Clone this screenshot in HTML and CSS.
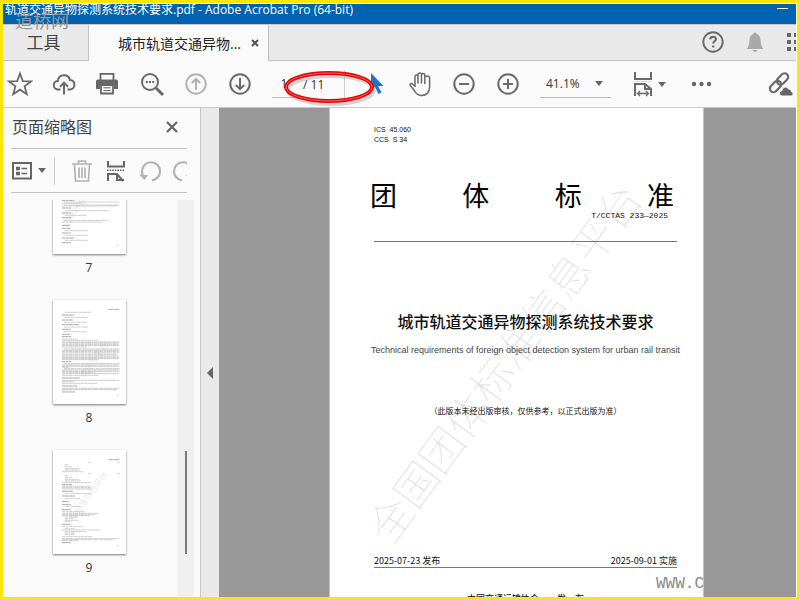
FILE: index.html
```html
<!DOCTYPE html>
<html lang="zh-CN">
<head>
<meta charset="utf-8">
<meta name="viewport" content="width=device-width, initial-scale=1">
<title>轨道交通异物探测系统技术要求.pdf - Adobe Acrobat Pro (64-bit)</title>
<link rel="stylesheet" href="styles.css">
</head>
<body>
<div class="window">
  <header class="titlebar">
    <span class="titlebar-text">轨道交通异物探测系统技术要求.pdf - Adobe Acrobat Pro (64-bit)</span>
    <button class="minimize" aria-label="最小化"></button>
  </header>
  <span class="stamp">道桥网</span>

  <nav class="tabs">
    <button class="tab tab-tools">工具</button>
    <div class="tab tab-doc">
      <span>城市轨道交通异物...</span>
      <button class="tab-close" aria-label="关闭标签"><svg width="8" height="8" viewBox="0 0 8 8"><path d="M1 1l6 6M7 1L1 7" stroke="#555" stroke-width="2"/></svg></button>
    </div>
    <div class="tabs-rest">
      <button class="icon" aria-label="帮助"><svg width="24" height="24" viewBox="0 0 24 24" fill="none" stroke="#6a6a6a"><circle cx="12" cy="12" r="9.7" stroke-width="1.9"/><path d="M9.2 9.4c.1-3.5 5.8-3.4 5.7-.1 0 2-2.7 2-2.7 4.2" stroke-width="2.1"/><path d="M11.1 15.5h2.2v2h-2.2z" fill="#6a6a6a" stroke="none"/></svg></button>
      <button class="icon" aria-label="通知"><svg width="24" height="24" viewBox="0 0 24 24" fill="#a9a9a9"><path d="M12 2.5c1 0 1.6.7 1.6 1.6 2.5.8 3.7 2.8 3.9 5.6.3 4.3.7 6.5 2.9 9.3H3.600c2.200-2.800 2.600-5 2.900-9.300.2-2.800 1.400-4.800 3.900-5.600 0-.9.6-1.600 1.600-1.600zM9.500 20h5c-.5 1.300-1.400 2-2.500 2s-2-.7-2.500-2z"/></svg></button>
      <button class="icon icon-grid" aria-label="应用"><svg width="18" height="18" viewBox="0 0 18 18" fill="#666"><path d="M0 0h4v4H0zM7 0h4v4H7zM14 0h4v4h-4zM0 7h4v4H0zM7 7h4v4H7zM14 7h4v4h-4zM0 14h4v4H0zM7 14h4v4H7zM14 14h4v4h-4z"/></svg></button>
    </div>
  </nav>

  <div class="toolbar">
    <button class="icon" aria-label="收藏"><svg width="26" height="26" viewBox="0 0 26 26"><path d="M13 2.500l2.800 7.600 8.100.3-6.300 5 2.200 7.800-6.800-4.500-6.800 4.500 2.200-7.800-6.300-5 8.100-.3z" fill="none" stroke="#6a6a6a" stroke-width="1.8"/></svg></button>
    <button class="icon" aria-label="上传"><svg width="26" height="26" viewBox="0 0 26 26" fill="none" stroke="#6a6a6a" stroke-width="2"><path d="M9.500 18.500H7.300c-2.700 0-4.500-1.900-4.500-4.200 0-2.500 1.800-4.100 4-4.200C7.200 6.500 9.800 4.300 13 4.300c2.900 0 5.300 1.900 6 4.700 2.600.2 4.400 2.200 4.400 4.700 0 2.700-2 4.800-4.500 4.800h-2.400"/><path d="M13 23.500V12.500M9 15.800l4-4.200 4 4.200"/></svg></button>
    <button class="icon" aria-label="打印"><svg width="26" height="26" viewBox="0 0 26 26"><path d="M5.500 9V2.900h13V9" fill="none" stroke="#666" stroke-width="1.800"/><path d="M3 8.500h18c1.200 0 2 .8 2 2V18h-4v-4H5v4H1v-7.500c0-1.200.8-2 2-2z" fill="#666"/><path d="M6 14h12v8.500H6z" fill="#fafafa" stroke="#666" stroke-width="1.800"/><path d="M8.500 16.800h7M8.500 19.500h7" stroke="#666"/></svg></button>
    <button class="icon" aria-label="查找"><svg width="26" height="26" viewBox="0 0 26 26" fill="none" stroke="#6a6a6a"><circle cx="11" cy="11" r="8" stroke-width="2"/><path d="M17 17l7 7" stroke-width="3"/><path d="M6.800 11h2M10 11h2M13.200 11h2" stroke-width="2"/></svg></button>
    <button class="icon" aria-label="上一页"><svg width="26" height="26" viewBox="0 0 26 26" fill="none" stroke="#b3b3b3" stroke-width="2"><circle cx="13" cy="13" r="9.700"/><path d="M13 19V8.500M8.800 12L13 7.800l4.200 4.200"/></svg></button>
    <button class="icon" aria-label="下一页"><svg width="26" height="26" viewBox="0 0 26 26" fill="none" stroke="#6a6a6a" stroke-width="2"><circle cx="13" cy="13" r="9.700"/><path d="M13 7v10.500M8.800 14l4.200 4.200 4.200-4.200"/></svg></button>
    <div class="pager">
      <input class="pager-input" type="text" value="1" aria-label="页码">
      <span>/ 11</span>
      <svg class="ring" width="104" height="44" viewBox="0 0 104 44" fill="none"><ellipse cx="51" cy="24" rx="43" ry="14" stroke="#999" stroke-opacity=".4" stroke-width="4"/><ellipse cx="49" cy="21" rx="43" ry="14" stroke="#e00c0c" stroke-width="4"/><ellipse cx="49" cy="21" rx="43" ry="14" stroke="#ff5555" stroke-width="1"/></svg>
    </div>
    <button class="icon" aria-label="选择"><svg width="26" height="26" viewBox="0 0 26 26"><path d="M8 2v18l4-4 3.500 7 3-1.500-3.500-6.500h5.500z" fill="#1f73c9"/></svg></button>
    <button class="icon" aria-label="手形工具"><svg width="26" height="26" viewBox="0 0 26 26" fill="none" stroke="#6a6a6a" stroke-width="1.500" stroke-linejoin="round" stroke-linecap="round"><path d="M8 15.500V5.700c0-2.200 3-2.200 3 0V12 3.600c0-2.200 3.500-2.200 3.500 0V12 4.200c0-2.200 3.300-2.200 3.300 0V12.500 6.500c0-2 4.800-2.200 4.800.5V16c0 5-3.200 8.500-7.600 8.500-4 0-6-1.800-7.500-4.700L3.200 14.500c-.9-1.700 1.300-2.600 2.500-1.300L8 15.500"/></svg></button>
    <button class="icon" aria-label="缩小"><svg width="26" height="26" viewBox="0 0 26 26" fill="none" stroke="#6a6a6a" stroke-width="2"><circle cx="13" cy="13" r="9.700"/><path d="M8 13h10"/></svg></button>
    <button class="icon" aria-label="放大"><svg width="26" height="26" viewBox="0 0 26 26" fill="none" stroke="#6a6a6a" stroke-width="2"><circle cx="13" cy="13" r="9.700"/><path d="M8 13h10M13 8v10"/></svg></button>
    <div class="zoom">
      <select class="zoom-select" aria-label="缩放"><option>41.1%</option></select>
      <i class="caret"></i>
    </div>
    <button class="fit" aria-label="适合宽度"><svg width="26" height="26" viewBox="0 0 26 26" fill="none" stroke="#6a6a6a" stroke-width="2"><path d="M5 1v7h16V1M5 25V13h10l6 5v7M15 13v5h6"/><path d="M7.500 22.500h11M10 20l-2.500 2.500L10 25M16 20l2.500 2.500L16 25" stroke-width="1.300"/><path d="M4 10.500h18" stroke="#ddd" stroke-width="1"/></svg><i class="caret"></i></button>
    <button class="icon" aria-label="更多"><svg width="26" height="26" viewBox="0 0 26 26" fill="#666"><circle cx="6" cy="13" r="2.200"/><circle cx="13.500" cy="13" r="2.200"/><circle cx="21" cy="13" r="2.200"/></svg></button>
    <button class="icon icon-link" aria-label="共享链接"><svg width="26" height="26" viewBox="0 0 26 26"><g fill="none" stroke="#6a6a6a" stroke-width="2.200"><rect x="-6.500" y="-3.700" width="13" height="7.400" rx="3.700" transform="translate(15.500 8) rotate(-46)"/><rect x="-6.500" y="-3.700" width="13" height="7.400" rx="3.700" transform="translate(8.500 15.500) rotate(-46)"/></g><path d="M15.500 25c-4 0-4-5-.5-5.300.5-4.500 5.500-4.500 6.500-1.700 2.500 0 3 1.800 2.800 2.700 2.500.5 2.300 4.300-.5 4.300z" fill="#666" stroke="#fafafa" stroke-width="1"/></svg></button>
  </div>

  <main class="work">
    <aside class="panel">
      <div class="panel-head">
        <h2>页面缩略图</h2>
        <button class="panel-close" aria-label="关闭面板"><svg width="12" height="12" viewBox="0 0 12 12"><path d="M1 1l10 10M11 1L1 11" stroke="#666" stroke-width="2.200"/></svg></button>
      </div>
      <div class="panel-tools">
        <button class="options" aria-label="选项"><svg width="20" height="18" viewBox="0 0 20 18" fill="none" stroke="#666"><rect x="1" y="1" width="18" height="15.500" stroke-width="2"/><path d="M4 6.500h4M4 11.500h4" stroke-width="3.500"/><path d="M9.500 6.500H15M9.500 11.500H15" stroke-width="1.500"/></svg><i class="caret"></i></button>
        <button class="ptool" aria-label="删除"><svg width="22" height="24" viewBox="0 0 22 24" fill="none" stroke="#b3b3b3" stroke-width="1.700"><path d="M1 5h20M7.500 4.500V2h7v2.500M3.500 5l1 17h13l1-17M8 8.500v10.500M11 8.500v10.500M14 8.500v10.500"/></svg></button>
        <button class="ptool" aria-label="拆分"><svg width="20" height="24" viewBox="0 0 20 24" fill="none" stroke="#666" stroke-width="2"><path d="M2 2v5.500h16V2M2 22v-7h9l6 7M11 15v6h7"/><path d="M1 11.200h18" stroke-width="1.600" stroke-dasharray="1.600 1"/></svg></button>
        <button class="ptool" aria-label="逆时针旋转"><svg width="24" height="24" viewBox="0 0 24 24"><path d="M14 21.500c5.500-1.500 8-5 8-9a9 9 0 0 0-18-.5c0 2 .3 4 1.500 6" fill="none" stroke="#b3b3b3" stroke-width="2.200"/><path d="M1 15.500l9 .5-3.500 5z" fill="#b3b3b3"/></svg></button>
        <button class="ptool" aria-label="顺时针旋转"><svg width="24" height="24" viewBox="0 0 24 24"><path d="M10 21.500c-5.500-1.500-8-5-8-9a9 9 0 0 1 18-.5c0 2-.3 4-1.500 6" fill="none" stroke="#b3b3b3" stroke-width="2.200"/><path d="M23 15.500l-9 .5 3.500 5z" fill="#b3b3b3"/></svg></button>
      </div>
      <div class="thumbs">
        <div class="thumb-list">
          <figure>
            <svg class="thumb" viewBox="0 0 219 312" aria-hidden="true">
              <text class="mark" transform="translate(42 232) rotate(-54)">团体标准信息平台</text>
              <path class="ln" d="M33 156h167M27 160h60M33 165h167M27 168h165M35 182h132M35 196h66M35 242h70M35 256h70M35 271h70"/>
              <path class="ln" d="M33 211h132M27 216h120"/>
              <path class="ln hd" d="M27 151h37M27 174h28M27 189h26M27 203h28M27 226h24M27 235h26M27 249h26M27 264h36M27 278h26M193 286h2"/>
            </svg>
            <figcaption>7</figcaption>
          </figure>
          <figure>
            <svg class="thumb" viewBox="0 0 219 312" aria-hidden="true">
              <text class="mark" transform="translate(92 236) rotate(-54)">准信息平台</text>
              <path class="ln" d="M35 37h79M33 52h72M33 67h66M33 81h72M33 95h68M27 117h44M27 121h110M27 141h75M27 164h165M27 179h110M27 202h22M27 217h100M27 226h110M27 245h40M27 250h105M27 274h40M27 277h40"/>
              <path class="ln tx" d="M27 126h172M27 129h170M27 133h172M27 137h172M33 147h167M27 151h172M27 155h172M27 159h172M27 168h172M27 172h172M27 176h172M33 191h167M27 195h172M27 199h172M33 206h167M27 210h172M27 214h172M27 221h172M27 241h172M27 265h172M27 269h165"/>
              <path class="ln hd" d="M167 28h32M27 45h38M27 60h34M27 74h52M27 88h26M27 103h24M27 110h28M27 185h28M27 234h54M27 258h46M193 287h3"/>
            </svg>
            <figcaption>8</figcaption>
          </figure>
          <figure>
            <svg class="thumb" viewBox="0 0 219 312" aria-hidden="true">
              <text class="mark" transform="translate(62 214) rotate(-54)">体标准信息平台</text>
              <path class="ln" d="M106 38h8M192 38h8M35 44h10M35 50h22M35 56h46M35 60h44M27 65h64M106 71h8M192 71h8M35 77h10M35 83h22M35 89h44M35 93h48M27 98h86M27 109h84M27 113h86M27 117h90M35 131h80M35 146h46M35 169h50M27 185h68M27 190h110M27 194h100M27 197h84M35 201h40M35 206h24M35 211h42M35 215h20M27 230h62M35 236h30M27 240h116M35 245h64M35 249h32M35 254h30M27 260h92M27 266h172M27 269h155M27 272h48"/>
              <path class="ln hd" d="M167 29h32M27 104h30M27 124h34M27 138h40M27 155h22M27 164h26M27 179h26M27 223h26M27 278h26M193 287h3"/>
            </svg>
            <figcaption>9</figcaption>
          </figure>
        </div>
        <div class="scrollbar"><div class="scroll-handle"></div></div>
      </div>
    </aside>
    <button class="splitter" aria-label="折叠面板"></button>
    <section class="viewer">
      <article class="page">
        <p class="codes">ICS  45.060<br>CCS  S 34</p>
        <h1 class="kind"><span>团</span><span>体</span><span>标</span><span>准</span></h1>
        <p class="number">T/CCTAS 233—2025</p>
        <p class="title">城市轨道交通异物探测系统技术要求</p>
        <p class="subtitle">Technical requirements of foreign object detection system for urban rail transit</p>
        <p class="notice">（此版本未经出版审核，仅供参考，以正式出版为准）</p>
        <div class="dates"><span>2025-07-23 发布</span><span>2025-09-01 实施</span></div>
        <p class="publisher"><span>中国交通运输协会</span><span>发</span><span>布</span></p>
        <span class="watermark">全国团体标准信息平台</span>
        <span class="site">WWW.C</span>
      </article>
    </section>
  </main>
</div>
</body>
</html>
```

FILE: styles.css
```css
* { box-sizing: border-box; }

body {
  margin: 0;
  font-family: "Open Sans", "Noto Sans CJK SC", sans-serif;
  color: #333;
}

button, input, select {
  margin: 0;
  padding: 0;
  border: 0;
  background: none;
  font: inherit;
  color: inherit;
}

svg { display: block; flex: none; }
h1, h2, p, figure { margin: 0; font-weight: 400; }

.window {
  position: relative;
  display: flex;
  flex-direction: column;
  height: 100vh;
  border: 3px solid #fbe60a;
  padding: 1px 1px 0 0;
  background: #fff;
  overflow: hidden;
}

.titlebar {
  display: flex;
  justify-content: space-between;
  flex: none;
  height: 20px;
  padding: 0 8px 0 2px;
  background: #0063b1;
  color: #fff;
  font-size: 12px;
  line-height: 11px;
  white-space: nowrap;
}
.minimize { width: 11px; height: 5px; border-bottom: 1px solid #fff; }

.stamp {
  position: absolute;
  left: 12px;
  top: 8px;
  font-size: 18px;
  line-height: 20px;
  color: #8c98a3;
}

.tabs {
  display: flex;
  flex: none;
  height: 37px;
  border-top: 1px solid #c8c8c8;
  background: #e9e9e9;
}
.tab { display: flex; align-items: center; padding-bottom: 2px; border-right: 1px solid #c4c4c4; }
.tab-tools {
  justify-content: center;
  width: 86px;
  padding-right: 4px;
  border-bottom: 1px solid #c4c4c4;
  font-size: 17px;
  color: #444;
}
.tab-doc {
  justify-content: space-between;
  width: 180px;
  padding: 0 9px 0 29px;
  background: #fafafa;
  font-size: 14px;
  color: #222;
}
.tabs-rest {
  display: flex;
  flex: 1;
  align-items: center;
  justify-content: flex-end;
  gap: 10px;
  padding-bottom: 2px;
  border-bottom: 1px solid #c4c4c4;
  overflow: hidden;
}
.icon { display: flex; align-items: center; justify-content: center; flex: none; width: 32px; height: 32px; }
.icon-grid { justify-content: flex-start; width: 25px; padding-left: 6px; margin-right: -10px; }

.toolbar {
  display: flex;
  align-items: center;
  gap: 12px;
  flex: none;
  height: 47px;
  padding-left: 1px;
  background: #fafafa;
  border-bottom: 1px solid #c8c8c8;
  font-size: 12px;
}
.pager {
  position: relative;
  display: flex;
  align-items: center;
  gap: 7px;
  flex: none;
  width: 76px;
  height: 28px;
  margin: 0 0 0 4px;
}
.pager::after { content: ""; width: 1px; height: 28px; margin-left: 13px; background: #ccc; }
.pager-input { width: 24px; height: 27px; border-bottom: 1px solid #bbb; text-align: center; }
.ring { position: absolute; left: 8px; top: -4px; z-index: 1; pointer-events: none; }

.caret {
  flex: none;
  border: 4px solid transparent;
  border-top: 5px solid #666;
  border-bottom: 0;
}
.zoom { display: flex; align-items: center; flex: none; width: 71px; margin-left: 4px; border-bottom: 1px solid #bbb; }
.zoom-select { flex: 1; min-width: 0; height: 26px; padding-left: 6px; appearance: none; }
.zoom .caret { margin-right: 8px; }
.fit { display: flex; align-items: center; justify-content: center; gap: 2px; width: 50px; height: 32px; }
.icon-link { margin-left: auto; }

.work { display: flex; flex: 1; min-height: 0; }

.panel {
  display: flex;
  flex-direction: column;
  flex: none;
  width: 198px;
  border-right: 1px solid #c4c4c4;
  background: #fafafa;
}
.panel-head, .panel-tools { display: flex; align-items: center; margin: 0 13px 0 8px; border-bottom: 1px solid #c4c4c4; }
.panel-head { justify-content: space-between; height: 41px; padding: 0 9px 2px 1px; }
.panel-head h2 { font-size: 16px; line-height: 24px; color: #444; }
.panel-tools { height: 44px; overflow: hidden; }
.options { display: flex; align-items: center; gap: 6px; flex: none; height: 28px; padding: 0 8px 0 1px; border-right: 1px solid #ccc; }
.ptool { display: flex; justify-content: center; flex: none; width: 34px; }
.options + .ptool { margin-left: 10px; }

.thumbs { display: flex; flex: 1; min-height: 0; margin: 7px 6px 0 0; overflow: hidden; }
.thumb-list { flex: 1; margin-top: -50px; padding-right: 3px; }
.thumb-list figure { display: flex; flex-direction: column; align-items: center; height: 150px; }
.thumb { width: 73px; height: 104px; background: #fff; box-shadow: 0 1px 2px #777; }
.thumb-list figcaption { margin-top: 5px; font-size: 12px; line-height: 18px; }
.ln { fill: none; stroke: #b4b4b4; stroke-width: 2; stroke-dasharray: 11 1 6 1; }
.hd { stroke: #777; }
.tx { stroke: #aaa; }
.mark { font-size: 25px; font-weight: 300; fill: #e4e4e4; }
.scrollbar { display: flex; justify-content: center; align-items: flex-end; width: 16px; padding-bottom: 43px; background: #efefef; }
.scroll-handle { width: 2px; height: 103px; background: #7d7d7d; }

.splitter {
  display: flex;
  align-items: center;
  justify-content: center;
  flex: none;
  width: 18px;
  padding-top: 40px;
  background: #e9e9e9;
}
.splitter::before { content: ""; border: 6px solid transparent; border-right-color: #666; border-left: 0; }

.viewer { display: flex; justify-content: center; flex: 1; min-width: 0; padding-left: 18px; background: #989898; overflow: hidden; }
.page {
  position: relative;
  flex: none;
  width: 375px;
  height: 530px;
  padding: 17px 26px 0 44px;
  border: 1px solid #c4c4c4;
  border-top: 0;
  background: #fff;
  color: #111;
  overflow: hidden;
}
.codes { font: 7px/10px "Liberation Sans", sans-serif; white-space: pre; }
.kind { display: flex; justify-content: space-between; margin: 36px 3px 0 -4px; font-size: 27px; line-height: 30px; color: #000; }
.number { margin-right: 9px; font: 8px/10px "Liberation Mono", monospace; text-align: right; }
.title { margin-top: 20px; border-top: 1px solid #777; padding-top: 67px; font-size: 16px; line-height: 26px; font-weight: 500; text-align: center; white-space: nowrap; }
.subtitle { margin: 9px -4px 0; font: 9px/12px "Liberation Sans", sans-serif; color: #444; text-align: center; white-space: nowrap; }
.notice { margin-top: 49px; font-size: 8px; line-height: 12px; text-align: center; white-space: nowrap; }
.dates { display: flex; justify-content: space-between; margin-top: 138px; border-bottom: 1px solid #777; font-size: 9px; line-height: 12px; font-family: "Noto Sans CJK SC", sans-serif; }
.publisher { display: flex; justify-content: center; gap: 9px; margin-top: 25px; font-size: 9px; line-height: 12px; font-weight: 500; }
.publisher span:first-child { margin-right: 9px; }

.watermark {
  position: absolute;
  left: 175px;
  top: 255px;
  translate: -50% -50%;
  rotate: -54deg;
  font-size: 43px;
  line-height: 44px;
  font-weight: 100;
  color: rgba(0, 0, 0, .12);
  white-space: nowrap;
}
.site { position: absolute; left: 326px; bottom: 44px; font: 16px/18px "Liberation Mono", monospace; color: #888; }
```
